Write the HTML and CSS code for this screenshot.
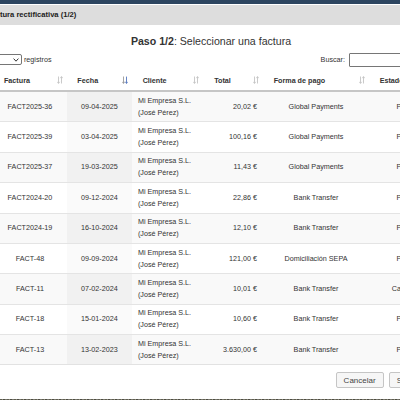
FILE: index.html
```html
<!DOCTYPE html>
<html lang="es">
<head>
    <meta charset="UTF-8">
    <meta name="viewport" content="width=device-width, initial-scale=1.0">
    <title>Factura rectificativa</title>
    <link rel="stylesheet" href="styles.css">
</head>
<body>
    <div class="topbar"></div>
    <div class="dialog">
        <div class="titlebar">Crear factura rectificativa (1/2)</div>
        <div class="dialog-body">
            <div class="step"><b>Paso 1/2</b>: Seleccionar una factura</div>

            <!-- barra de datatables -->
            <div class="toolbar">
                <div class="length">
                    <span>Mostrar</span>
                    <span class="select-wrap">
                        <select class="length-select">
                            <option>10</option>
                            <option>25</option>
                            <option>50</option>
                        </select>
                        <svg class="chevron" width="6" height="4" viewBox="0 0 6 4"><polyline points="0.6,0.6 3,3.2 5.4,0.6" fill="none" stroke="#333" stroke-width="1"/></svg>
                    </span>
                    <span>registros</span>
                </div>
                <label class="search">Buscar: <input type="text"></label>
            </div>

            <table class="grid">
                <colgroup>
                    <col style="width:73.4px">
                    <col style="width:65.3px">
                    <col style="width:71.5px">
                    <col style="width:59.5px">
                    <col style="width:106px">
                    <col style="width:80px">
                </colgroup>
                <thead>
                    <tr>
                        <th><div class="th-in"><span>Factura</span><svg class="sort" width="6" height="8" viewBox="0 0 6 8"><path d="M1.5 0.5V7.3M0.3 5.8L1.5 7.4L2.7 5.8M4.5 0.7V7.5M3.3 2.2L4.5 0.6L5.7 2.2" fill="none" stroke="#c4c4c4" stroke-width="0.9"/></svg></div></th>
                        <th><div class="th-in"><span>Fecha</span><svg class="sort" width="6" height="8" viewBox="0 0 6 8"><path d="M1.5 0.5V7.3M0.3 5.8L1.5 7.4L2.7 5.8" fill="none" stroke="#9a9a9a" stroke-width="0.9"/><path d="M4.5 0.6V7.4M3.3 5.8L4.5 7.4L5.7 5.8" fill="none" stroke="#5577c0" stroke-width="0.9"/></svg></div></th>
                        <th><div class="th-in"><span>Cliente</span><svg class="sort" width="6" height="8" viewBox="0 0 6 8"><path d="M1.5 0.5V7.3M0.3 5.8L1.5 7.4L2.7 5.8M4.5 0.7V7.5M3.3 2.2L4.5 0.6L5.7 2.2" fill="none" stroke="#c4c4c4" stroke-width="0.9"/></svg></div></th>
                        <th><div class="th-in"><span>Total</span><svg class="sort" width="6" height="8" viewBox="0 0 6 8"><path d="M1.5 0.5V7.3M0.3 5.8L1.5 7.4L2.7 5.8M4.5 0.7V7.5M3.3 2.2L4.5 0.6L5.7 2.2" fill="none" stroke="#c4c4c4" stroke-width="0.9"/></svg></div></th>
                        <th><div class="th-in"><span>Forma de pago</span><svg class="sort" width="6" height="8" viewBox="0 0 6 8"><path d="M1.5 0.5V7.3M0.3 5.8L1.5 7.4L2.7 5.8M4.5 0.7V7.5M3.3 2.2L4.5 0.6L5.7 2.2" fill="none" stroke="#c4c4c4" stroke-width="0.9"/></svg></div></th>
                        <th><div class="th-in"><span>Estado</span><svg class="sort" width="6" height="8" viewBox="0 0 6 8"><path d="M1.5 0.5V7.3M0.3 5.8L1.5 7.4L2.7 5.8M4.5 0.7V7.5M3.3 2.2L4.5 0.6L5.7 2.2" fill="none" stroke="#c4c4c4" stroke-width="0.9"/></svg></div></th>
                    </tr>
                </thead>
                <tbody>
                    <tr>
                        <td class="c">FACT2025-36</td><td class="c sorted">09-04-2025</td><td>Mi Empresa S.L.<br>(José Pérez)</td><td class="r">20,02 €</td><td class="c">Global Payments</td><td class="c">Pagada</td>
                    </tr>
                    <tr>
                        <td class="c">FACT2025-39</td><td class="c sorted">03-04-2025</td><td>Mi Empresa S.L.<br>(José Pérez)</td><td class="r">100,16 €</td><td class="c">Global Payments</td><td class="c">Pagada</td>
                    </tr>
                    <tr>
                        <td class="c">FACT2025-37</td><td class="c sorted">19-03-2025</td><td>Mi Empresa S.L.<br>(José Pérez)</td><td class="r">11,43 €</td><td class="c">Global Payments</td><td class="c">Pagada</td>
                    </tr>
                    <tr>
                        <td class="c">FACT2024-20</td><td class="c sorted">09-12-2024</td><td>Mi Empresa S.L.<br>(José Pérez)</td><td class="r">22,86 €</td><td class="c">Bank Transfer</td><td class="c">Pagada</td>
                    </tr>
                    <tr>
                        <td class="c">FACT2024-19</td><td class="c sorted">16-10-2024</td><td>Mi Empresa S.L.<br>(José Pérez)</td><td class="r">12,10 €</td><td class="c">Bank Transfer</td><td class="c">Pagada</td>
                    </tr>
                    <tr>
                        <td class="c">FACT-48</td><td class="c sorted">09-09-2024</td><td>Mi Empresa S.L.<br>(José Pérez)</td><td class="r">121,00 €</td><td class="c">Domiciliación SEPA</td><td class="c">Pagada</td>
                    </tr>
                    <tr>
                        <td class="c">FACT-11</td><td class="c sorted">07-02-2024</td><td>Mi Empresa S.L.<br>(José Pérez)</td><td class="r">10,01 €</td><td class="c">Bank Transfer</td><td class="c">Cancelada</td>
                    </tr>
                    <tr>
                        <td class="c">FACT-18</td><td class="c sorted">15-01-2024</td><td>Mi Empresa S.L.<br>(José Pérez)</td><td class="r">10,60 €</td><td class="c">Bank Transfer</td><td class="c">Pagada</td>
                    </tr>
                    <tr>
                        <td class="c">FACT-13</td><td class="c sorted">13-02-2023</td><td>Mi Empresa S.L.<br>(José Pérez)</td><td class="r">3.630,00 €</td><td class="c">Bank Transfer</td><td class="c">Pagada</td>
                    </tr>
                </tbody>
            </table>

            <div class="buttons">
                <button class="btn">Cancelar</button>
                <button class="btn">Siguiente</button>
            </div>
        </div>
    </div>
    <div class="backdrop"></div>
</body>
</html>
```

FILE: styles.css
```css
* {
    box-sizing: border-box;
}

html,
body {
    margin: 0;
    padding: 0;
    width: 400px;
    height: 400px;
    overflow: hidden;
    background: #fff;
    font-family: "Liberation Sans", Arial, sans-serif;
    color: #333;
}

.topbar {
    height: 4px;
    background: #2c4560;
}

.dialog {
    width: 500px;
    margin-left: -40px;
    padding-top: 1px;
    background: #fff;
}

.titlebar {
    height: 20px;
    padding-left: 7px;
    background: #dddddd;
    font-size: 7.6px;
    font-weight: bold;
    line-height: 20px;
    color: #222;
}

.dialog-body {
    padding: 10px 0 0 5.6px;
}

.step {
    width: 490.8px;
    text-align: center;
    font-size: 10.6px;
    line-height: 13px;
}

/* controles de la tabla */
.toolbar {
    display: flex;
    justify-content: space-between;
    align-items: center;
    width: 483.4px;
    height: 15px;
    margin-top: 4px;
    font-size: 7.2px;
}

.length {
    display: flex;
    align-items: center;
    gap: 2px;
    margin-left: -12px;
}

.select-wrap {
    position: relative;
    display: flex;
}

.length-select {
    appearance: none;
    -webkit-appearance: none;
    width: 42px;
    height: 11px;
    margin: 0;
    padding: 0 0 0 2px;
    border: 1px solid #767676;
    border-radius: 2px;
    background: #fff;
    font-family: inherit;
    font-size: 7px;
    color: #333;
}

.chevron {
    position: absolute;
    right: 2.5px;
    top: 4px;
}

.search {
    display: flex;
    align-items: center;
    gap: 4px;
}

.search input {
    width: 100px;
    height: 14px;
    margin: 0;
    padding: 0;
    border: 1px solid #767676;
    border-radius: 1px;
}

.grid {
    width: 455.7px;
    margin-top: 3px;
    margin-left: 27.7px;
    table-layout: fixed;
    border-collapse: collapse;
    font-size: 7.2px;
    color: #333;
    border-bottom: 1px solid #e2e2e2;
}

.grid th {
    padding: 5.5px 4px 5.5px 10.7px;
    line-height: 9px;
    text-align: left;
    font-weight: bold;
    color: #333;
    border-bottom: 2px solid #c6c6c6;
}

.th-in {
    display: flex;
    justify-content: space-between;
    align-items: center;
}

.sort {
    flex: none;
}

.grid td {
    padding: 2.7px 6px;
    line-height: 12px;
    vertical-align: middle;
    border-top: 1px solid #e4e4e4;
    white-space: nowrap;
    overflow: hidden;
}

.grid tbody tr:first-child td {
    border-top: none;
}

.grid tbody tr:nth-child(odd) td {
    background: #f9f9f9;
}

.grid tbody tr:nth-child(odd) td.sorted {
    background: #f1f1f1;
}

.grid tbody tr:nth-child(even) td.sorted {
    background: #fafafa;
}

.grid td.c {
    text-align: center;
}

.grid td.r {
    text-align: right;
}

.buttons {
    display: flex;
    justify-content: flex-end;
    gap: 5px;
    width: 472.4px;
    margin-top: 7px;
    height: 27px;
}

.btn {
    height: 16px;
    margin: 0;
    padding: 0 7px;
    border: 1px solid #c5c5c5;
    border-radius: 2px;
    background: #f6f6f6;
    font-family: inherit;
    font-size: 8px;
    color: #454545;
}

/* fondo oscurecido detras del dialogo */
.backdrop {
    height: 10px;
    background: repeating-linear-gradient(90deg, #5d5c4f 0, #5d5c4f 2px, #8c8a78 2px, #8c8a78 3px, #4c4b42 3px, #4c4b42 5px, #77766a 5px, #77766a 7px);
}
```
